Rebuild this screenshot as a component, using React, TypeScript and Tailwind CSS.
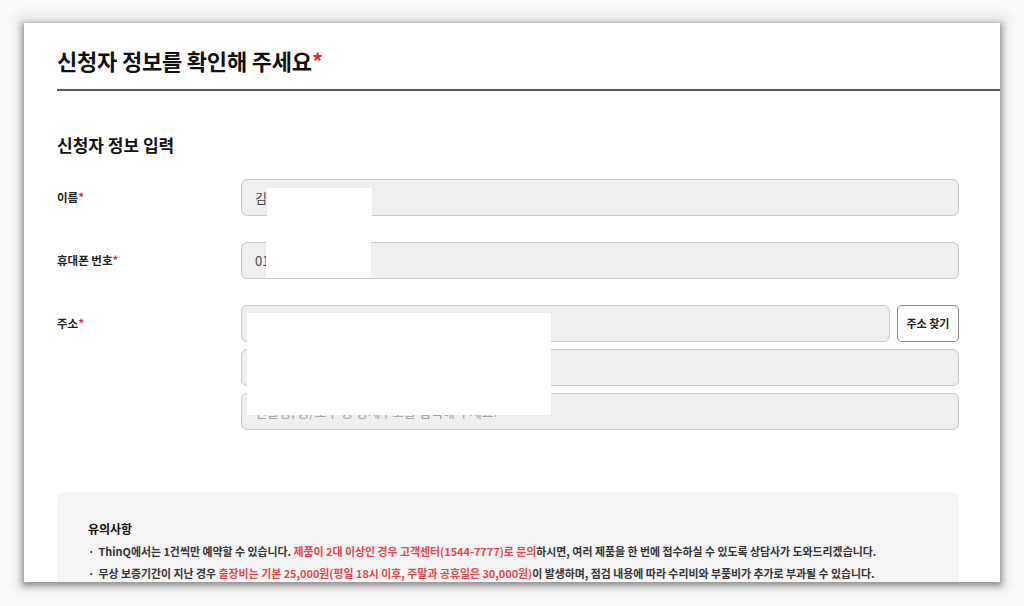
const font = {
  fontFamily: '"Noto Sans CJK KR", "Noto Sans", "Liberation Sans", sans-serif',
};

function Req() {
  return <span className="text-[#e0262f]">*</span>;
}

function Field({ value, placeholder, grow }: { value?: string; placeholder?: string; grow?: boolean }) {
  return (
    <div
      className={`flex h-[37px] shrink-0 items-center rounded-[6px] border border-[#c9c9c9] bg-[#efefef] px-[13px] text-[13px] text-[#444] ${grow ? "min-w-0 flex-1" : "w-full"}`}
    >
      {value ?? <span className="text-[#a0a0a0]">{placeholder}</span>}
    </div>
  );
}

function Row({ label, children }: { label: string; children: React.ReactNode }) {
  return (
    <div className="flex items-start">
      <div className="flex h-[37px] w-[184px] shrink-0 items-center text-[11.5px] font-bold text-[#222]">
        {label}
        <Req />
      </div>
      <div className="flex min-w-0 flex-1 flex-col gap-[7px]">{children}</div>
    </div>
  );
}

export default function App() {
  return (
    <div style={font} className="h-[606px] w-[1024px] overflow-hidden bg-[#fafafa] pl-[24px] pt-[23px]">
      <div className="relative h-[559px] w-[976px] overflow-hidden bg-white shadow-[0_2px_6px_2px_rgba(0,0,0,0.38),0_0_12px_9px_rgba(0,0,0,0.07)]">
        <div className="pl-[33px] pt-[22px]">
          <h1 className="text-[22px] font-bold leading-[30px] tracking-[-0.2px] text-[#111]">
            신청자 정보를 확인해 주세요<Req />
          </h1>
          <div className="mt-[14px] h-[2px] bg-[#5a5a5a]" />

          <div className="pr-[41px]">
            <h2 className="mt-[41px] text-[17px] font-bold leading-[26px] text-[#111]">신청자 정보 입력</h2>

            <div className="mt-[21px] flex flex-col gap-[26px]">
              <Row label="이름">
                <Field value="김" />
              </Row>
              <Row label="휴대폰 번호">
                <Field value="01" />
              </Row>
              <Row label="주소">
                <div className="flex w-full gap-[7px]">
                  <Field value="" grow />
                  <button className="h-[37px] w-[62px] shrink-0 rounded-[5px] border border-[#888] bg-white text-[11px] font-bold text-[#222]">
                    주소 찾기
                  </button>
                </div>
                <Field value="" />
                <Field placeholder="건물명, 동/호수 등 상세주소를 입력해 주세요." />
              </Row>
            </div>

            <div className="mt-[62px] h-[140px] rounded-[8px] bg-[#f4f4f4] pl-[31px] pr-[20px] pt-[27px]">
              <h3 className="text-[12px] font-bold leading-[20px] text-[#111]">유의사항</h3>
              <ul className="mt-[1px] text-[10.9px] font-bold leading-[22px] text-[#333]">
                <li className="flex gap-[4px]">
                  <span>·</span>
                  <span>
                    ThinQ에서는 1건씩만 예약할 수 있습니다.{" "}
                    <span className="text-[#e5474c]">제품이 2대 이상인 경우 고객센터(1544-7777)로 문의</span>
                    하시면, 여러 제품을 한 번에 접수하실 수 있도록 상담사가 도와드리겠습니다.
                  </span>
                </li>
                <li className="flex gap-[4px]">
                  <span>·</span>
                  <span>
                    무상 보증기간이 지난 경우{" "}
                    <span className="text-[#e5474c]">출장비는 기본 25,000원(평일 18시 이후, 주말과 공휴일은 30,000원)</span>
                    이 발생하며, 점검 내용에 따라 수리비와 부품비가 추가로 부과될 수 있습니다.
                  </span>
                </li>
              </ul>
            </div>
          </div>
        </div>

        {/* masked personal info */}
        <div className="absolute left-[243px] top-[165px] h-[36px] w-[105px] bg-white" />
        <div className="absolute left-[242px] top-[219px] h-[36px] w-[105px] bg-white" />
        <div className="absolute left-[223px] top-[290px] h-[102px] w-[304px] bg-white" />
      </div>
    </div>
  );
}
